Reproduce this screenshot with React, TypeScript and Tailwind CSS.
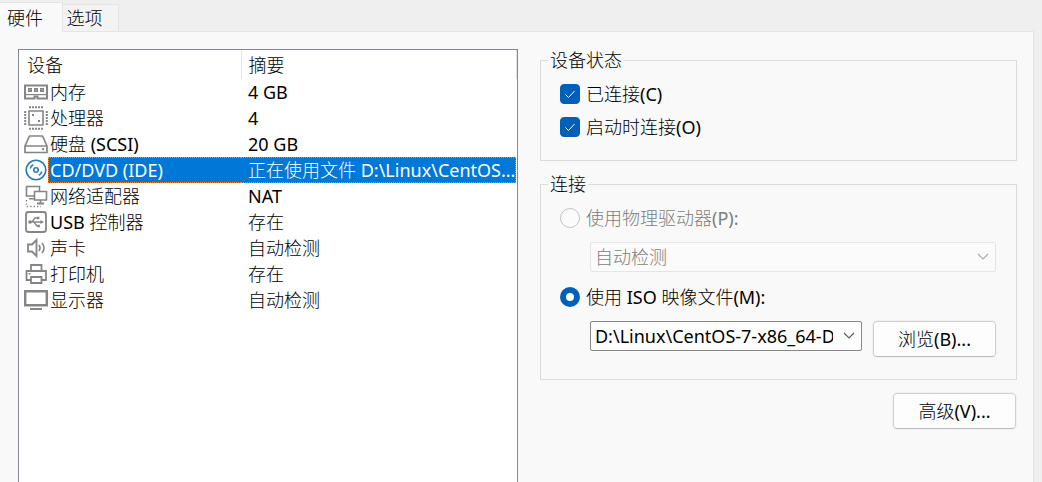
import { useState, type ReactNode } from "react";

const stroke = { fill: "none", stroke: "#858585", strokeWidth: 2 } as const;

function DeviceIcon({ children }: { children: ReactNode }) {
  return (
    <svg viewBox="0 0 24 24" className="size-6 shrink-0" aria-hidden="true">
      {children}
    </svg>
  );
}

const MemoryIcon = () => (
  <DeviceIcon>
    <path {...stroke} d="M1 5.500h22V18.500h-9.500v-2h-3v2H1z" />
    <path fill="#858585" d="M1 14h22v1.200H1z" />
    <path fill="#858585" d="M4 8h4v4H4zM10 8h4v4h-4zM16 8h4v4h-4z" />
    <path fill="#d0d0d0" d="M5.500 9.500h1v1h-1zM11.500 9.500h1v1h-1zM17.500 9.500h1v1h-1z" />
  </DeviceIcon>
);

const CpuIcon = () => (
  <DeviceIcon>
    <path {...stroke} strokeWidth={1.6} d="M5 5h14v14H5z" />
    <path {...stroke} strokeDasharray="2 1" d="M5 1.200h14M5 22.800h14M1.200 5v14M22.800 5v14" />
    <path fill="#858585" d="M8 8h2v2H8zM14 14h2v2h-2z" />
  </DeviceIcon>
);

const DiskIcon = () => (
  <DeviceIcon>
    <path {...stroke} strokeWidth={1.7} strokeLinejoin="round" d="M5.500 4h13L23 14v6.500H1V14zM1 14h22" />
    <path fill="#858585" d="M18 16h2v2h-2z" />
  </DeviceIcon>
);

const DiscIcon = () => (
  <DeviceIcon>
    <g fill="none" stroke="#2a7ab8" strokeWidth="1.600">
      <circle cx="12" cy="12" r="9.800" />
      <circle cx="12" cy="12" r="2.200" />
      <path d="M6.200 10.500a6 6 0 0 1 3-3.800M17.800 13.500a6 6 0 0 1-3 3.800" />
    </g>
  </DeviceIcon>
);

const NetworkIcon = () => (
  <DeviceIcon>
    <path {...stroke} strokeWidth={1.6} d="M10 12H2.500V2.500h13V7M5 14.800h5M10.500 7.500h12v8.500h-12zM16.500 16v3" />
    <path {...stroke} d="M13 19.500h7" />
    <path {...stroke} strokeWidth={1.4} strokeDasharray="1.400 2" d="M2.500 16v6.500H17" />
  </DeviceIcon>
);

const UsbIcon = () => (
  <DeviceIcon>
    <rect {...stroke} strokeWidth={1.8} x="2" y="2" width="20" height="20" rx="2.500" />
    <path {...stroke} strokeWidth={1.3} d="M5 12h13M8 12l3-4h3M10 12l3 4h2" />
    <path fill="#858585" d="M13 6.800h2.400v2.400H13zM13.500 14.800h2.400v2.400h-2.400zM16.500 10l3.500 2-3.500 2z" />
    <circle cx="6" cy="12" r="1.800" fill="#858585" />
  </DeviceIcon>
);

const SoundIcon = () => (
  <DeviceIcon>
    <path {...stroke} strokeWidth={1.8} d="M4 8.500h4L12.500 4v16L8 15.500H4z" />
    <path {...stroke} strokeWidth={1.6} d="M15 9q2 3 0 6M18 7q4 5 0 10" />
  </DeviceIcon>
);

const PrinterIcon = () => (
  <DeviceIcon>
    <path {...stroke} strokeWidth={1.8} d="M7 9V3h10.500v6M7 18H2.500V9h19.500v9h-4.500M7 15h10.500v6H7z" />
    <path fill="#858585" d="M4.500 11h2v1.500h-2z" />
  </DeviceIcon>
);

const DisplayIcon = () => (
  <DeviceIcon>
    <path {...stroke} strokeWidth={2.4} d="M1.200 3.200h21.600v14H1.200z" />
    <path {...stroke} d="M6 21h12" />
  </DeviceIcon>
);

const devices = [
  { name: "内存", summary: "4 GB", Icon: MemoryIcon },
  { name: "处理器", summary: "4", Icon: CpuIcon },
  { name: "硬盘 (SCSI)", summary: "20 GB", Icon: DiskIcon },
  { name: "CD/DVD (IDE)", summary: "正在使用文件 D:\\Linux\\CentOS...", Icon: DiscIcon },
  { name: "网络适配器", summary: "NAT", Icon: NetworkIcon },
  { name: "USB 控制器", summary: "存在", Icon: UsbIcon },
  { name: "声卡", summary: "自动检测", Icon: SoundIcon },
  { name: "打印机", summary: "存在", Icon: PrinterIcon },
  { name: "显示器", summary: "自动检测", Icon: DisplayIcon },
];

function DeviceTable() {
  const [selected, setSelected] = useState(3);
  return (
    <table className="w-full table-fixed border-collapse text-left">
      <thead>
        <tr className="h-[29px]">
          <th className="w-[222px] border-r border-[#e5e5e5] p-0 pl-2 font-normal">设备</th>
          <th className="border-r border-[#e5e5e5] p-0 pl-[7px] font-normal">摘要</th>
        </tr>
      </thead>
      <tbody>
        {devices.map(({ name, summary, Icon }, i) => {
          const on = i === selected;
          return (
            <tr key={name} onClick={() => setSelected(i)} aria-selected={on}>
              <td className="p-0">
                <div className="flex h-[26px] items-center pl-[5px]">
                  <Icon />
                  <span
                    className={
                      on
                        ? "flex h-full flex-1 items-center border-y border-l border-dotted border-[#ff8728] bg-[#0078d7] pl-px text-white"
                        : "flex h-full flex-1 items-center pl-0.5"
                    }
                  >
                    {name}
                  </span>
                </div>
              </td>
              <td className="p-0">
                <div
                  className={
                    on
                      ? "h-[26px] truncate border-y border-r border-dotted border-[#ff8728] bg-[#0078d7] pl-[7px] leading-6 text-white"
                      : "h-[26px] truncate pl-[7px] leading-[26px]"
                  }
                >
                  {summary}
                </div>
              </td>
            </tr>
          );
        })}
      </tbody>
    </table>
  );
}

function CheckRow({ label }: { label: string }) {
  return (
    <label className="flex h-6 items-center gap-1.5">
      <span className="grid size-5">
        <input
          type="checkbox"
          defaultChecked
          className="peer col-start-1 row-start-1 size-5 appearance-none rounded border border-[#868686] checked:border-[#005fb8] checked:bg-[#005fb8]"
        />
        <svg
          viewBox="0 0 20 20"
          className="pointer-events-none col-start-1 row-start-1 hidden size-5 peer-checked:block"
          aria-hidden="true"
        >
          <path d="M5.500 10.500l3 3 6-6.500" fill="none" stroke="#fff" strokeWidth="1" />
        </svg>
      </span>
      {label}
    </label>
  );
}

type SelectProps = { label: string; value: string; disabled?: boolean };

function Select({ label, value, disabled }: SelectProps) {
  return (
    <div className="grid min-w-0 flex-1">
      <select
        aria-label={label}
        disabled={disabled}
        className="col-start-1 row-start-1 h-[30px] w-full min-w-0 appearance-none rounded-xs border border-[#868686] bg-white pr-7 pl-1 disabled:border-[#e5e5e5] disabled:bg-[#fbfbfb] disabled:text-[#7d7d7d] disabled:opacity-100"
      >
        <option>{value}</option>
      </select>
      <svg
        viewBox="0 0 12 8"
        className="pointer-events-none col-start-1 row-start-1 mt-[11px] mr-[7px] h-2 w-3 justify-self-end"
        aria-hidden="true"
      >
        <path d="M1 1l5 5 5-5" fill="none" stroke={disabled ? "#ababab" : "#5c5c5c"} strokeWidth="1.200" />
      </svg>
    </div>
  );
}

const radioClass =
  "size-5 appearance-none rounded-full border border-[#c3c3c3] bg-[#fbfbfb] checked:border-[6px] checked:border-[#005fb8] checked:bg-white";
const buttonClass =
  "h-9 w-[123px] shrink-0 rounded border border-[#d0d0d0] border-b-[#bdbdbd] bg-[#fdfdfd] outline outline-[#f0f0f0]";
const groupClass = "min-w-0 border border-[#dcdcdc] pl-[19px]";
const legendClass = "-ml-3 h-6 px-0.5";

export default function App() {
  return (
    <div className="flex min-h-screen flex-col bg-[#efefef] pr-2 font-['Noto_Sans','Noto_Sans_CJK_SC_Light','Noto_Sans_CJK_SC',sans-serif] text-[18px] leading-6 text-black">
      <nav role="tablist" className="flex items-end pt-0.5">
        <button
          role="tab"
          aria-selected="true"
          className="h-[30px] w-[63px] border-t border-r border-[#e5e5e5] bg-[#f9f9f9] pr-3"
        >
          硬件
        </button>
        <button
          role="tab"
          aria-selected="false"
          className="h-7 w-14 border-y border-r border-[#e5e5e5] bg-[#f3f3f3] pr-3"
        >
          选项
        </button>
        <span className="flex-1 self-stretch border-b border-[#e5e5e5]" />
      </nav>
      <main className="flex flex-1 gap-[22px] border-r border-[#e5e5e5] bg-[#f9f9f9] pt-[17px] pr-4 pl-[18px]">
        <section aria-label="设备" className="min-w-0 flex-[499] border border-b-0 border-[#828790] bg-white">
          <DeviceTable />
        </section>
        <form className="-mt-px flex min-w-0 flex-[478] flex-col" onSubmit={(e) => e.preventDefault()}>
          <fieldset className={`${groupClass} pb-[21px]`}>
            <legend className={legendClass}>设备状态</legend>
            <div className="flex flex-col gap-[9px] pt-2.5">
              <CheckRow label="已连接(C)" />
              <CheckRow label="启动时连接(O)" />
            </div>
          </fieldset>
          <fieldset className={`${groupClass} mt-[11px] pr-5 pb-[22px]`}>
            <legend className={legendClass}>连接</legend>
            <label className="mt-2.5 flex h-6 items-center gap-1.5 text-[#7d7d7d]">
              <input type="radio" name="source" disabled className={radioClass} />
              使用物理驱动器(P):
            </label>
            <div className="mt-3 flex pl-[30px]">
              <Select label="物理驱动器" value="自动检测" disabled />
            </div>
            <label className="mt-[13px] flex h-6 items-center gap-1.5">
              <input type="radio" name="source" defaultChecked className={radioClass} />
              使用 ISO 映像文件(M):
            </label>
            <div className="mt-3 flex gap-[11px] pl-[30px]">
              <Select label="ISO 映像文件" value="D:\Linux\CentOS-7-x86_64-DVD-2009.iso" />
              <button type="button" className={buttonClass}>
                浏览(B)...
              </button>
            </div>
          </fieldset>
          <button type="button" className={`${buttonClass} mt-[13px] mr-px self-end`}>
            高级(V)...
          </button>
        </form>
      </main>
    </div>
  );
}
